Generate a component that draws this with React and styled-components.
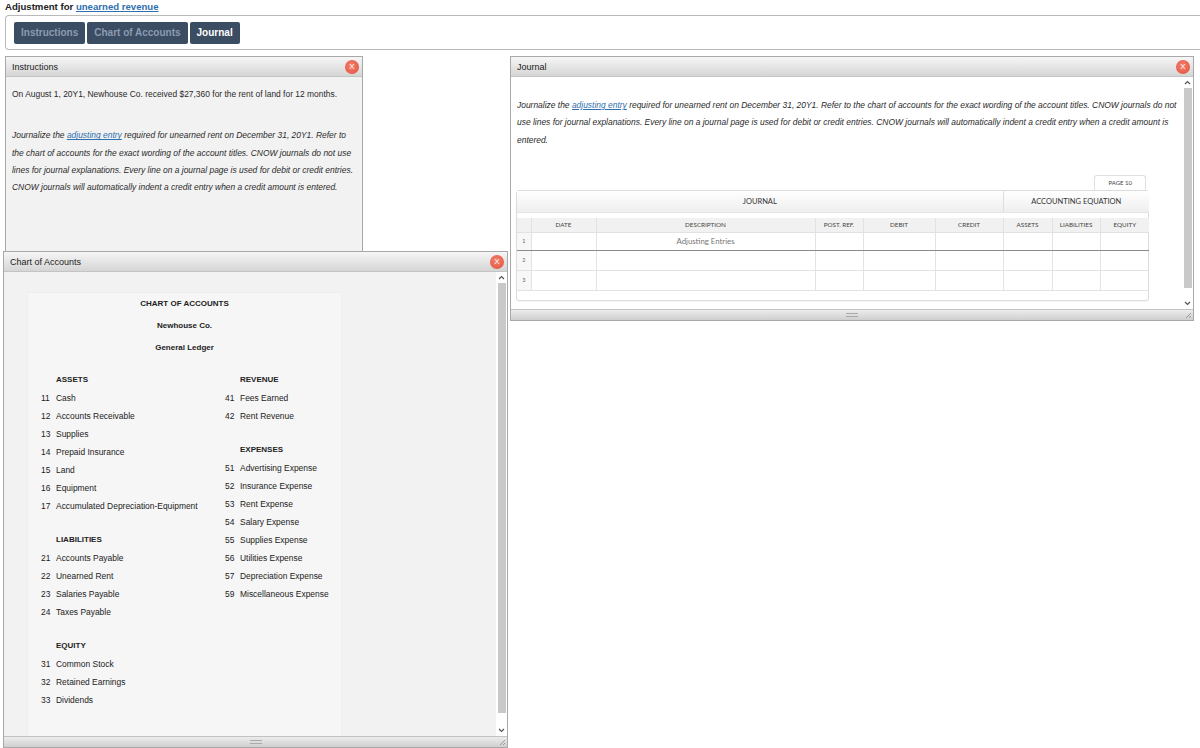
import React from 'react';
import styled, { createGlobalStyle } from 'styled-components';

const GlobalStyle = createGlobalStyle`
  html, body {
    margin: 0;
    padding: 0;
    background: #fff;
  }
  body {
    font-family: "Liberation Sans", Arial, sans-serif;
    color: #222;
  }
`;

const Page = styled.div`
  width: 1200px;
  height: 748px;
  overflow: hidden;
`;

const Heading = styled.h1`
  margin: 0;
  padding: 0 5px;
  height: 14px;
  font-size: 9.6px;
  line-height: 13px;
  font-weight: bold;
  color: #222;
`;

const Link = styled.a`
  color: #2f6fae;
  text-decoration: underline;
  cursor: pointer;
`;

const TabBox = styled.div`
  box-sizing: border-box;
  margin: 1px 0 0 5px;
  height: 35px;
  border: 1px solid #b9b9b9;
  border-right: none;
  border-radius: 4px 0 0 4px;
  padding: 0 8px;
  display: flex;
  align-items: center;
  gap: 2px;
`;

const TabButton = styled.button`
  height: 22px;
  padding: 0 7px;
  border: none;
  border-radius: 2px;
  background: #3b4d62;
  color: ${p => (p.$active ? '#fff' : '#8b9bb0')};
  font-family: "Liberation Sans", Arial, sans-serif;
  font-size: 10px;
  font-weight: bold;
  cursor: pointer;
`;

const Desktop = styled.div`
  position: relative;
  height: 698px;
`;

const Window = styled.section`
  position: absolute;
  left: ${p => p.$x}px;
  top: ${p => p.$y}px;
  width: ${p => p.$w}px;
  height: ${p => p.$h}px;
  box-sizing: border-box;
  border: 1px solid #a8a8a8;
  background: ${p => p.$bg || '#f2f2f2'};
  display: flex;
  flex-direction: column;
  z-index: ${p => p.$z || 1};
`;

const TitleBar = styled.header`
  flex: none;
  height: 20px;
  box-sizing: border-box;
  border-bottom: 1px solid #c4c4c4;
  background: linear-gradient(#f6f6f6, #d5d5d5);
  display: flex;
  align-items: center;
  justify-content: space-between;
  padding: 0 3px 0 6px;
  font-size: 9px;
  color: #222;
`;

const Close = styled.span`
  width: 14px;
  height: 14px;
  border-radius: 50%;
  background: radial-gradient(circle at 45% 40%, #f4806e, #e0503c);
  color: #fff;
  font-size: 8px;
  line-height: 14px;
  text-align: center;
`;

const Body = styled.div`
  flex: 1;
  min-height: 0;
  display: flex;
`;

const Content = styled.div`
  flex: 1;
  min-width: 0;
  padding: ${p => p.$pad};
`;

const BottomBar = styled.footer`
  flex: none;
  height: 11px;
  box-sizing: border-box;
  border-top: 1px solid #c2c2c2;
  background: linear-gradient(#ececec, #cfcfcf);
  display: flex;
  align-items: center;
  justify-content: center;
  position: relative;
`;

const Grip = styled.span`
  width: 12px;
  height: 2px;
  border-top: 1px solid #a9a9a9;
  border-bottom: 1px solid #a9a9a9;
`;

const Resize = styled.svg`
  position: absolute;
  right: 1px;
  bottom: 1px;
`;

const Scroll = styled.div`
  flex: none;
  width: 11px;
  display: flex;
  flex-direction: column;
  background: #fff;
`;

const Arrow = styled.div`
  flex: none;
  height: 11px;
  display: flex;
  align-items: center;
  justify-content: center;
`;

const Track = styled.div`
  flex: 1;
  padding: 0 1px 0 2px;
  display: flex;
  flex-direction: column;
`;

const Thumb = styled.div`
  flex: 1;
  background: #c9c9c9;
  margin-bottom: ${p => p.$gap}px;
`;

const Chevron = ({ up }) => (
  <svg width="7" height="5" viewBox="0 0 7 5">
    <path d={up ? 'M1 4 L3.5 1.5 L6 4' : 'M1 1 L3.5 3.5 L6 1'} fill="none" stroke="#555" strokeWidth="1.2" />
  </svg>
);

const ScrollBar = ({ gap }) => (
  <Scroll>
    <Arrow><Chevron up /></Arrow>
    <Track><Thumb $gap={gap} /></Track>
    <Arrow><Chevron /></Arrow>
  </Scroll>
);

const Footer = () => (
  <BottomBar>
    <Grip />
    <Resize width="8" height="8" viewBox="0 0 8 8">
      <path d="M7 2 L2 7 M7 5 L5 7" stroke="#9a9a9a" strokeWidth="1" />
    </Resize>
  </BottomBar>
);

/* instructions */
const Para = styled.p`
  margin: ${p => (p.$first ? '0' : '24px 0 0')};
  font-size: 8.45px;
  line-height: 17.3px;
  font-style: ${p => (p.$italic ? 'italic' : 'normal')};
  color: #2a2a2a;
`;

/* chart of accounts */
const LedgerBox = styled.div`
  width: 315px;
  box-sizing: border-box;
  background: #f6f6f6;
  border: 1px solid #eeeeee;
  padding: 0 0 12px 13px;
  font-size: 8.45px;
  color: #222;
`;

const Caption = styled.div`
  text-align: center;
  font-weight: bold;
  font-size: 8px;
  line-height: 22px;
  padding-right: 13px;
`;

const Columns = styled.div`
  margin-top: 12px;
  display: grid;
  grid-template-columns: 184px 1fr;
`;

const Group = styled.div`
  margin-bottom: 16px;
`;

const GroupTitle = styled.div`
  padding-left: 15px;
  line-height: 18px;
  font-size: 8px;
  font-weight: bold;
`;

const Account = styled.div`
  display: flex;
  line-height: 18px;
  span:first-child {
    width: 15px;
    flex: none;
  }
`;

const left = [
  ['ASSETS', [['11', 'Cash'], ['12', 'Accounts Receivable'], ['13', 'Supplies'], ['14', 'Prepaid Insurance'], ['15', 'Land'], ['16', 'Equipment'], ['17', 'Accumulated Depreciation-Equipment']]],
  ['LIABILITIES', [['21', 'Accounts Payable'], ['22', 'Unearned Rent'], ['23', 'Salaries Payable'], ['24', 'Taxes Payable']]],
  ['EQUITY', [['31', 'Common Stock'], ['32', 'Retained Earnings'], ['33', 'Dividends']]],
];

const right = [
  ['REVENUE', [['41', 'Fees Earned'], ['42', 'Rent Revenue']]],
  ['EXPENSES', [['51', 'Advertising Expense'], ['52', 'Insurance Expense'], ['53', 'Rent Expense'], ['54', 'Salary Expense'], ['55', 'Supplies Expense'], ['56', 'Utilities Expense'], ['57', 'Depreciation Expense'], ['59', 'Miscellaneous Expense']]],
];

const AccountColumn = ({ groups }) => (
  <div>
    {groups.map(([title, items]) => (
      <Group key={title}>
        <GroupTitle>{title}</GroupTitle>
        {items.map(([n, name]) => (
          <Account key={n}><span>{n}</span><span>{name}</span></Account>
        ))}
      </Group>
    ))}
  </div>
);

/* journal */
const JournalWrap = styled.div`
  width: 633px;
  margin: 26px 0 0 -1px;
  font-family: Lato, "Open Sans", sans-serif;
`;

const PageTabRow = styled.div`
  display: flex;
  justify-content: flex-end;
  padding-right: 3px;
`;

const PageTab = styled.div`
  height: 15px;
  box-sizing: border-box;
  padding: 0 13px;
  border: 1px solid #e0e0e0;
  border-bottom: none;
  border-radius: 3px 3px 0 0;
  font-size: 6px;
  line-height: 14px;
  color: #444;
  background: #fff;
`;

const Ledger = styled.div`
  border: 1px solid #dcdcdc;
  border-radius: 3px;
  background: #fff;
  padding-bottom: 9px;
  box-shadow: 0 1px 1px rgba(0, 0, 0, 0.04);
`;

const Table = styled.table`
  width: 100%;
  border-collapse: collapse;
  table-layout: fixed;
`;

const BandCell = styled.th`
  height: 21px;
  padding: 0;
  font-size: 7.5px;
  font-weight: normal;
  color: #333;
  background: linear-gradient(#ffffff, #eeeeee);
  border-bottom: 1px solid #e4e4e4;
  border-left: ${p => (p.$split ? '1px solid #dedede' : 'none')};
`;

const Spacer = styled.td`
  height: 5px;
  padding: 0;
`;

const ColHead = styled.th`
  height: 14px;
  padding: 0;
  font-size: 6.3px;
  font-weight: normal;
  color: #444;
  background: #f1f1f1;
  border-left: 1px solid #e2e2e2;
  border-bottom: 1px solid #e2e2e2;
  &:first-child {
    border-left: none;
  }
`;

const Cell = styled.td`
  height: ${p => p.$h}px;
  padding: 0;
  border: 1px solid #e3e3e3;
  border-bottom: ${p => (p.$strong ? '1px solid #8a8a8a' : '1px solid #e3e3e3')};
  text-align: center;
  font-size: 7.8px;
  color: #777;
  &:first-child {
    border-left: none;
    background: #f7f7f7;
    font-size: 5.5px;
    color: #666;
  }
  &:last-child {
    border-right: none;
  }
`;

const widths = [14, 65, 219, 48, 72, 68, 49, 48, 49];
const heads = ['', 'DATE', 'DESCRIPTION', 'POST. REF.', 'DEBIT', 'CREDIT', 'ASSETS', 'LIABILITIES', 'EQUITY'];
const rows = [
  { n: 1, h: 17, desc: 'Adjusting Entries', strong: true },
  { n: 2, h: 19 },
  { n: 3, h: 19 },
];

const JournalTable = () => (
  <JournalWrap>
    <PageTabRow><PageTab>PAGE 10</PageTab></PageTabRow>
    <Ledger>
      <Table>
        <colgroup>
          {widths.map((w, i) => <col key={i} style={{ width: w }} />)}
        </colgroup>
        <thead>
          <tr>
            <BandCell colSpan={6}>JOURNAL</BandCell>
            <BandCell colSpan={3} $split>ACCOUNTING EQUATION</BandCell>
          </tr>
          <tr><Spacer colSpan={9} /></tr>
          <tr>
            {heads.map((h, i) => <ColHead key={i}>{h}</ColHead>)}
          </tr>
        </thead>
        <tbody>
          {rows.map(r => (
            <tr key={r.n}>
              <Cell $h={r.h} $strong={r.strong}>{r.n}</Cell>
              <Cell $h={r.h} $strong={r.strong} />
              <Cell $h={r.h} $strong={r.strong}>{r.desc}</Cell>
              {[0, 1, 2, 3, 4, 5].map(k => <Cell key={k} $h={r.h} $strong={r.strong} />)}
            </tr>
          ))}
        </tbody>
      </Table>
    </Ledger>
  </JournalWrap>
);

const journalText = (
  <>
    Journalize the <Link>adjusting entry</Link> required for unearned rent on December 31, 20Y1. Refer to the chart of accounts for the exact wording of the account titles. CNOW journals do not use lines for journal explanations. Every line on a journal page is used for debit or credit entries. CNOW journals will automatically indent a credit entry when a credit amount is entered.
  </>
);

export default function App() {
  return (
    <Page>
      <GlobalStyle />
      <Heading>
        Adjustment for <Link>unearned revenue</Link>
      </Heading>
      <TabBox>
        <TabButton>Instructions</TabButton>
        <TabButton>Chart of Accounts</TabButton>
        <TabButton $active>Journal</TabButton>
      </TabBox>

      <Desktop>
        <Window $x={5} $y={6} $w={358} $h={205} $z={1}>
          <TitleBar>Instructions<Close>X</Close></TitleBar>
          <Body>
            <Content $pad="9px 4px 0 6px">
              <Para $first>On August 1, 20Y1, Newhouse Co. received $27,360 for the rent of land for 12 months.</Para>
              <Para $italic>{journalText}</Para>
            </Content>
          </Body>
        </Window>

        <Window $x={3} $y={201} $w={505} $h={497} $z={2}>
          <TitleBar>Chart of Accounts<Close>X</Close></TitleBar>
          <Body>
            <Content $pad="20px 0 0 23px">
              <LedgerBox>
                <Caption>CHART OF ACCOUNTS</Caption>
                <Caption>Newhouse Co.</Caption>
                <Caption>General Ledger</Caption>
                <Columns>
                  <AccountColumn groups={left} />
                  <AccountColumn groups={right} />
                </Columns>
              </LedgerBox>
            </Content>
            <ScrollBar gap={12} />
          </Body>
          <Footer />
        </Window>

        <Window $x={510} $y={6} $w={684} $h={265} $bg="#fff" $z={1}>
          <TitleBar>Journal<Close>X</Close></TitleBar>
          <Body>
            <Content $pad="20px 2px 0 6px">
              <Para $first $italic>{journalText}</Para>
              <JournalTable />
            </Content>
            <ScrollBar gap={10} />
          </Body>
          <Footer />
        </Window>
      </Desktop>
    </Page>
  );
}
